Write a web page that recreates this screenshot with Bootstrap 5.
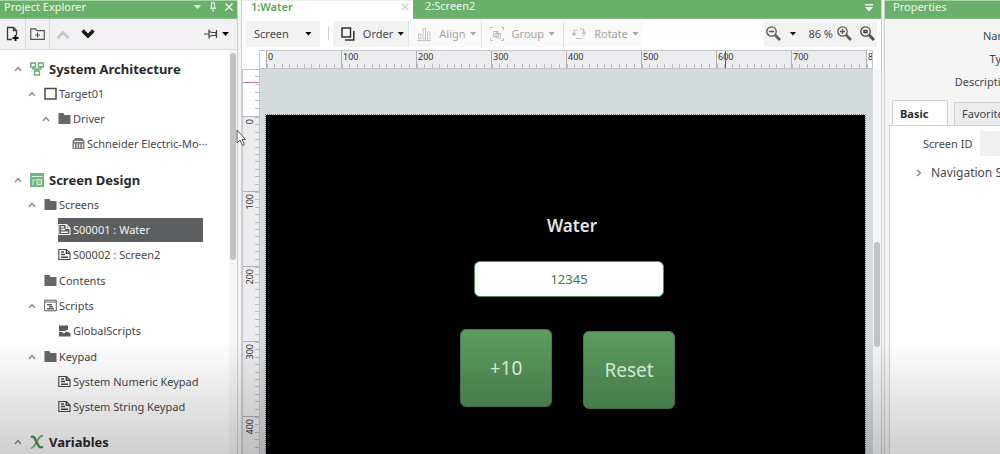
<!DOCTYPE html>
<html lang="en">
<head>
<meta charset="utf-8">
<meta name="viewport" content="width=device-width, initial-scale=1">
<title>Screen Editor</title>
<link href="https://cdn.jsdelivr.net/npm/bootstrap@5.3.0/dist/css/bootstrap.min.css" rel="stylesheet">
<style>
:root { --green: #69b16b; --ink: #47474a; --unit: 75px; }
body { font-family: "Noto Sans", "Open Sans", sans-serif; font-size: 11px; line-height: 16px; color: var(--ink); background: #fff; }
body::after { content: ""; position: fixed; inset: 75% 0 0 0; pointer-events: none; z-index: 9; background: linear-gradient(transparent, rgba(0,0,0,.19)); }
button { border: 0; background: none; padding: 0; color: inherit; line-height: 16px; }
svg { display: block; flex: none; }
ul { list-style: none; margin: 0; padding: 0; }

.bar { height: 19px; flex: none; background: var(--green); color: #effaec; border-top: 1px solid #a5d3a3; border-bottom: 1px solid #86bf86; padding-bottom: 5px; }
.tools { height: 31px; flex: none; }
main .tools { padding-bottom: 2px; }

.explorer { flex: 0 0 237px; }
.explorer .tools { background: #f3f1f3; border-bottom: 1px solid #dadada; }
.explorer .tools button { height: 30px; width: 25px; display: flex; align-items: center; justify-content: center; }
.explorer .tools .framed { border-left: 1px solid #dcdcdc; border-right: 1px solid #dcdcdc; }
.splitter { flex: 0 0 5px; background: #f4f4f5; border-left: 1px solid #cfcfd2; border-right: 1px solid #cfcfd2; }
.splitter.thin { flex-basis: 4px; }
.track { width: 8px; background: #f6f6f7; padding: 3px 1px; }
.track.for-desk { padding-top: 173px; }
.thumb { background: #c3c3c6; border-radius: 3px; height: 207px; }
.for-desk .thumb { height: 105px; }

.tree { padding: 6px 0 0 11px; }
.tree > li { margin-bottom: 8px; }
.tree ul { padding-left: 14px; padding-bottom: 1px; }
.tree h2 { font-size: 13px; font-weight: 700; margin: 0 0 0 5px; line-height: 18px; color: #2a2a2a; }
.node { height: 25px; display: flex; align-items: center; white-space: nowrap; }
.fold { width: 14px; margin-right: 5px; display: flex; justify-content: center; color: #858585; flex: none; }
.item { display: flex; align-items: center; gap: 2px; color: inherit; text-decoration: none; height: 24px; }
.item.chosen { background: #5c5e60; color: #f4f4f4; width: 145px; }

.tab-open { width: 171px; height: 19px; background: #fff; color: #56a559; font-weight: 600; padding: 0 4px 6px 9px; border-top: 1px solid #e6f2e6; }
.tab-back { line-height: 12px; }
.tool-group { background: #f3f2f3; height: 26px; }
.tool-group.off { background: #fafafa; color: #a3a3a3; }
.tool-group button { height: 26px; display: flex; align-items: center; gap: 8px; }
.tool-group .near { gap: 4px; }
.near svg { margin-right: 4px; }
.zooms { padding: 0 2px; }
.caret { width: 7px; height: 4px; background: currentColor; clip-path: polygon(0 0,100% 0,50% 100%); }

.ruler { background: #ececee; color: #333; font-size: 9px; line-height: 12px; overflow: hidden; }
.ruler-x { height: 19px; flex: none; margin: 0 8px 0 17px; border: 1px solid #c4c6c9; }
.ruler-x .step { flex: 0 0 var(--unit); padding-left: 1px; border-left: 1px solid #aeb0b3; background: repeating-linear-gradient(to right, #b9bbbe 0 1px, transparent 1px 10%) bottom / 100% 4px no-repeat; }
.ruler-x .step.beyond { background-color: #fff; }
.ruler-y { flex: 0 0 18px; border: 1px solid #c4c6c9; border-bottom: 0; }
.ruler-y .step { flex: 0 0 var(--unit); border-top: 1px solid #aeb0b3; padding-top: 2px; background: repeating-linear-gradient(to bottom, #b9bbbe 0 1px, transparent 1px 10%) right / 4px 100% no-repeat; }
.ruler-y .step span { writing-mode: vertical-rl; transform: rotate(180deg); display: block; width: 12px; margin-left: 1px; }
.lead-in { background: #fff; flex: 0 0 6px; }
.ruler-y .lead-in { flex: 0 0 46px; background: repeating-linear-gradient(to top, transparent 0 7px, #b9bbbe 7px 8px) right / 4px 100% no-repeat #fff; }
.mark-x { position: absolute; left: 465px; top: 0; bottom: 0; width: 1px; background: #e0202f; z-index: 1; }
.mark-y { position: absolute; top: 12px; left: 0; right: 0; height: 1px; background: #d0808a; }
.desk { background: #d5dadd; padding: 46px 8px 0 6px; }
.hmi { background: #000; outline: 1px dotted #777; color: #e3e6e5; }
.hmi > * { position: absolute; }
.hmi-title { left: 281px; top: 99px; font-size: 17px; line-height: 24px; font-weight: 600; }
.hmi-value { left: 208px; top: 146px; width: 190px; height: 36px; border: 1px solid #4f8f56; border-radius: 6px; background: #fff; color: #4a7458; text-align: center; font-size: 13px; }
.hmi-key { width: 92px; height: 78px; border: 1px solid #477c51; border-radius: 6px; background: linear-gradient(#5b9b5e, #518b56); color: #def3df; font-size: 19px; }
.key-add { left: 194px; top: 214px; }
.key-reset { left: 317px; top: 216px; }

.props { flex: 0 0 115px; background: #f5f5f6; }
.prop-names { width: 129px; padding-top: 6px; height: 81px; text-align: right; }
.prop-names div { height: 23px; padding-top: 3px; }
.prop-tabs { padding-left: 7px; gap: 6px; }
.prop-tabs button { height: 23px; width: 70px; border: 1px solid #d2d2d4; border-bottom: 0; background: #ececee; flex: none; text-align: left; padding-left: 7px; }
.prop-tabs .current { height: 26px; width: 56px; background: #fff; font-weight: 700; margin-bottom: -1px; color: #2c2c2c; }
.prop-page { background: #fff; border: 1px solid #d2d2d4; border-bottom: 0; margin-left: 4px; width: 140px; padding: 5px 0 0 33px; }
.prop-page input { width: 60px; height: 25px; border: 0; background: #f0f0f1; margin-left: 8px; }
.fold-row { margin-left: -7px; height: 33px; font-size: 12px; gap: 9px; }
.pointer { position: absolute; left: 236px; top: 129px; z-index: 5; }
</style>
</head>
<body>
<svg width="0" height="0" class="position-absolute" aria-hidden="true">
  <symbol id="up" viewBox="0 0 8 6"><path d="M1 5 4 1.500 7 5" fill="none" stroke="currentColor" stroke-width="1.300"/></symbol>
  <symbol id="folder" viewBox="0 0 13 13"><path d="M.5 1H5.500L6.500 3H12.500V12H.5Z" fill="#666"/></symbol>
  <symbol id="page" viewBox="0 0 13 13"><path d="M.8 1.500H8.500L12 5V11.500H.8Z" fill="none" stroke="currentColor" stroke-width="1.100"/><path d="M8.300 1.500V5.200H12M3 4H6M3 6.500H7M3 9.300H10" fill="none" stroke="currentColor" stroke-width="1.400"/></symbol>
</svg>

<div class="d-flex vh-100 overflow-hidden position-relative">
  <aside class="explorer d-flex flex-column">
    <header class="bar d-flex align-items-center ps-1 pe-1">
      <span class="me-auto">Project Explorer</span>
      <div class="d-flex align-items-center gap-2">
        <button aria-label="Menu"><span class="caret d-block"></span></button>
        <button aria-label="Pin"><svg width="8" height="10" viewBox="0 0 8 10" fill="none" stroke="#fff"><path d="M2.500 1V6M5.500 1V6M2 1H6M1 6.200H7M4 6V10"/></svg></button>
        <button aria-label="Close"><svg width="8" height="8" viewBox="0 0 8 8" stroke="#fff" stroke-width="1.200"><path d="M.5.5 7.500 7.500M7.500.5.500 7.500"/></svg></button>
      </div>
    </header>
    <div class="tools d-flex">
      <button aria-label="New screen"><svg width="13" height="16" viewBox="0 0 13 16" fill="none" stroke="#3b3b3b" stroke-width="1.300"><path d="M6 13.500H1.500V1.500H7.500L10.500 4.500V9M7.500 1.500V4.700H10.500"/><path d="M9.500 9V15M6.500 12H12.500" stroke="#111" stroke-width="2"/></svg></button>
      <button class="framed" aria-label="New folder"><svg width="15" height="12" viewBox="0 0 15 12" fill="none" stroke="#555" stroke-width="1.200"><path d="M.7 11.300V.8H5.500L7 2.700H14.300V11.300ZM7.500 4.500V9.500M5 7H10"/></svg></button>
      <button aria-label="Move up"><svg width="14" height="9" viewBox="0 0 14 9" fill="none" stroke="#c7c6c8" stroke-width="2.800"><path d="M1.500 8 7 2.500 12.500 8"/></svg></button>
      <button aria-label="Move down"><svg width="14" height="10" viewBox="0 0 14 10" fill="none" stroke="#161616" stroke-width="3.400"><path d="M1.500 1.500 7 7 12.500 1.500"/></svg></button>
      <button class="ms-auto me-2 gap-1" aria-label="Pin options"><svg width="14" height="10" viewBox="0 0 14 10" fill="none" stroke="#444" stroke-width="1.200"><path d="M0 5H5M5 .5V9.500M5 2.500 8 3.500H12V6.500H8L5 7.500M12.500 1V9"/></svg><span class="caret text-black"></span></button>
    </div>
    <div class="d-flex flex-grow-1 overflow-hidden">
      <ul class="tree flex-grow-1">
        <li>
          <div class="node"><button class="fold" aria-label="Collapse"><svg width="8" height="6"><use href="#up"/></svg></button>
            <svg width="14" height="14" viewBox="0 0 14 14" fill="none" stroke="#62ad79" stroke-width="1.400"><path d="M.8 1H5.500V5H.8ZM8.500 1H13.200V5H8.500ZM4.500 9H9.500V13H4.500ZM3 5V7H11V5M7 7V9"/></svg>
            <h2>System Architecture</h2></div>
          <ul><li>
            <div class="node"><button class="fold" aria-label="Collapse"><svg width="8" height="6"><use href="#up"/></svg></button><a class="item" href="#"><svg width="13" height="13" viewBox="0 0 13 13" fill="none" stroke="#4a4a4a" stroke-width="1.500"><path d="M1 1.500H12V12H1Z"/></svg>Target01</a></div>
            <ul><li>
              <div class="node"><button class="fold" aria-label="Collapse"><svg width="8" height="6"><use href="#up"/></svg></button><a class="item" href="#"><svg width="13" height="13"><use href="#folder"/></svg>Driver</a></div>
              <ul><li class="node"><span class="fold"></span><a class="item" href="#"><svg width="13" height="13" viewBox="0 0 13 13"><path d="M3 1H10L12.500 4V12H.5V4Z" fill="#7b7b7b"/><path d="M2 4.500H11M2.500 6.500V11M5.200 6.500V11M7.800 6.500V11M10.500 6.500V11" stroke="#f0f0f0" stroke-width="1.100"/></svg>Schneider Electric-Mo···</a></li></ul>
            </li></ul>
          </li></ul>
        </li>
        <li>
          <div class="node"><button class="fold" aria-label="Collapse"><svg width="8" height="6"><use href="#up"/></svg></button>
            <svg width="14" height="14" viewBox="0 0 14 14"><path d="M0 0H14V14H0Z" fill="#72b780"/><path d="M1.500 3.500H12.500M3 6V12M5 6V8" stroke="#d9efdc"/><path d="M7 6.500H11.500V11.500H7Z" fill="#8cc896" stroke="#d9efdc"/></svg>
            <h2>Screen Design</h2></div>
          <ul>
            <li>
              <div class="node"><button class="fold" aria-label="Collapse"><svg width="8" height="6"><use href="#up"/></svg></button><a class="item" href="#"><svg width="13" height="13"><use href="#folder"/></svg>Screens</a></div>
              <ul>
                <li class="node"><span class="fold"></span><a class="item chosen" href="#"><svg width="13" height="13"><use href="#page"/></svg>S00001 : Water</a></li>
                <li class="node"><span class="fold"></span><a class="item" href="#"><svg width="13" height="13"><use href="#page"/></svg>S00002 : Screen2</a></li>
              </ul>
            </li>
            <li class="node"><span class="fold"></span><a class="item" href="#"><svg width="13" height="13"><use href="#folder"/></svg>Contents</a></li>
            <li>
              <div class="node"><button class="fold" aria-label="Collapse"><svg width="8" height="6"><use href="#up"/></svg></button><a class="item" href="#"><svg width="13" height="13" viewBox="0 0 13 13" fill="none" stroke="#5f5f5f"><path d="M.7 1.200H12.300V11.800H.7ZM.7 3H12.300"/><path d="M3 5.800H8M5 7.800H9M3 9.800H10" stroke-width="1.500"/></svg>Scripts</a></div>
              <ul><li class="node"><span class="fold"></span><a class="item" href="#"><svg width="13" height="13" viewBox="0 0 13 13" fill="#5a5a5a"><path d="M1 1 3 2 4.500 1 6 2 8 1 10 2V5.500L7 7H1ZM1 8H4L6 9.500 8 7.500 12.500 9V12.500H1Z"/></svg>GlobalScripts</a></li></ul>
            </li>
            <li>
              <div class="node"><button class="fold" aria-label="Collapse"><svg width="8" height="6"><use href="#up"/></svg></button><a class="item" href="#"><svg width="13" height="13"><use href="#folder"/></svg>Keypad</a></div>
              <ul>
                <li class="node"><span class="fold"></span><a class="item" href="#"><svg width="13" height="13"><use href="#page"/></svg>System Numeric Keypad</a></li>
                <li class="node"><span class="fold"></span><a class="item" href="#"><svg width="13" height="13"><use href="#page"/></svg>System String Keypad</a></li>
              </ul>
            </li>
          </ul>
        </li>
        <li>
          <div class="node"><button class="fold" aria-label="Collapse"><svg width="8" height="6"><use href="#up"/></svg></button>
            <svg width="14" height="14" viewBox="0 0 14 14" fill="none"><path d="M13 1C10 .5 9 3 7 6.500S3 13.500 1 13" stroke="#74b779" stroke-width="1.800"/><path d="M1 2C4.500.5 5 4 6.500 7S9 13.500 13 12" stroke="#44924c" stroke-width="2.400"/></svg>
            <h2>Variables</h2></div>
        </li>
      </ul>
      <div class="track"><div class="thumb"></div></div>
    </div>
  </aside>
  <div class="splitter"></div>

  <main class="flex-grow-1 d-flex flex-column overflow-hidden">
    <nav class="bar d-flex align-items-start p-0 border-top-0">
      <button class="tab-open d-flex justify-content-between align-items-center">1:Water<svg width="8" height="8" viewBox="0 0 8 8" stroke="#c6cfc8" stroke-width="1.200"><path d="M.5.5 7.500 7.500M7.500.5.500 7.500"/></svg></button>
      <button class="tab-back ms-2 ps-1 flex-grow-1 text-start">2:Screen2</button>
      <button class="me-1 pe-1 mt-1" aria-label="Tab list"><svg width="8" height="8" viewBox="0 0 8 8" fill="#fff"><path d="M0 0H8V1.500H0ZM0 3H8L4 7.500Z"/></svg></button>
    </nav>
    <div class="tools d-flex align-items-center ps-1 pe-1">
      <div class="tool-group ps-2 pe-2"><button class="gap-3">Screen<span class="caret text-black"></span></button></div>
      <div class="vr ms-2 me-1 my-2 opacity-25"></div>
      <div class="tool-group ps-2 pe-1 border-end"><button class="near"><svg width="14" height="14" viewBox="0 0 14 14" fill="none" stroke="#333" stroke-width="1.500"><path d="M1 1H9.500V10H1ZM12.800 4V13H4"/></svg>Order<span class="caret text-black"></span></button></div>
      <div class="tool-group off ps-2 pe-1 border-end"><button class="near"><svg width="14" height="14" viewBox="0 0 14 14" fill="none" stroke="#c6c6c6"><path d="M1.500 7H4V12H1.500ZM6 1.500H8.500V12H6ZM10.500 5H13V12H10.500ZM0 13.500H14"/></svg>Align<span class="caret"></span></button></div>
      <div class="tool-group off ps-2 pe-2 border-end"><button class="near"><svg width="14" height="14" viewBox="0 0 14 14" fill="none" stroke="#bcbcbc"><path d="M0 3V.5H3M11 .5H13.500V3M13.500 11V13.500H11M3 13.500H.5V11M3.500 4.500H8V9.500H3.500ZM6 6.500H10.500V11H6ZM4 8 8 4M7 10 10 7"/></svg>Group<span class="caret"></span></button></div>
      <div class="tool-group off ps-2 pe-1"><button class="near"><svg width="14" height="12" viewBox="0 0 14 12" fill="none" stroke="#bcbcbc" stroke-width="1.200"><path d="M2 7V4Q2 2 4 2H6M0 5 2 7.500 4 5M8 1H10Q12 1 12 4V8M10 6 12 3.500 14 6M4 10.500H10"/></svg>Rotate<span class="caret"></span></button></div>
      <div class="tool-group zooms ms-auto d-flex align-items-center gap-2">
        <button aria-label="Zoom out"><svg width="15" height="15" viewBox="0 0 15 15" fill="none" stroke="#555" stroke-width="1.300"><circle cx="5.500" cy="5.500" r="4.700"/><path d="M3 5.500H8M9 10 10 9 14 13 13 14Z"/></svg></button>
        <button aria-label="Zoom levels"><span class="caret text-black"></span></button>
        <div class="d-flex align-items-center gap-1 ps-1"><span>86 %</span>
        <button aria-label="Zoom in"><svg width="15" height="15" viewBox="0 0 15 15" fill="none" stroke="#555" stroke-width="1.300"><circle cx="5.500" cy="5.500" r="4.700"/><path d="M3 5.500H8M5.500 3V8M9 10 10 9 14 13 13 14Z"/></svg></button></div>
        <button aria-label="Zoom to fit"><svg width="15" height="15" viewBox="0 0 15 15" fill="none" stroke="#444" stroke-width="1.300"><circle cx="5.500" cy="5.500" r="4.700"/><path d="M4 4.500H7V6.500H4ZM9 10 10 9 14 13 13 14Z"/></svg></button>
      </div>
    </div>
    <div class="ruler ruler-x d-flex position-relative">
      <div class="lead-in"></div><div class="mark-x"></div>
      <div class="step">0</div><div class="step">100</div><div class="step">200</div><div class="step">300</div><div class="step">400</div><div class="step">500</div><div class="step">600</div><div class="step">700</div><div class="step beyond">800</div>
    </div>
    <div class="d-flex flex-grow-1 overflow-hidden">
      <div class="ruler ruler-y d-flex flex-column position-relative">
        <div class="lead-in"></div><div class="mark-y"></div>
        <div class="step"><span>0</span></div><div class="step"><span>100</span></div><div class="step"><span>200</span></div><div class="step"><span>300</span></div><div class="step"><span>400</span></div>
      </div>
      <div class="desk flex-grow-1 d-flex">
        <div class="hmi flex-grow-1 position-relative">
          <label class="hmi-title" for="level">Water</label>
          <input class="hmi-value" id="level" value="12345">
          <button class="hmi-key key-add">+10</button>
          <button class="hmi-key key-reset">Reset</button>
        </div>
      </div>
      <div class="track for-desk"><div class="thumb"></div></div>
    </div>
  </main>
  <div class="splitter thin"></div>

  <aside class="props overflow-hidden d-flex flex-column">
    <header class="bar d-flex align-items-center ps-1"><span class="ps-1">Properties</span></header>
    <div class="prop-names"><div>Name</div><div>Type</div><div>Description</div></div>
    <div class="prop-tabs d-flex align-items-end"><button class="current">Basic</button><button>Favorite</button></div>
    <div class="prop-page flex-grow-1">
      <div class="d-flex align-items-center"><label class="text-nowrap" for="sid">Screen ID</label><input id="sid"></div>
      <button class="fold-row d-flex align-items-center text-nowrap"><svg width="6" height="8" viewBox="0 0 6 8" fill="none" stroke="#777" stroke-width="1.200"><path d="M1 1 4.500 4 1 7"/></svg>Navigation Settings</button>
    </div>
  </aside>
  <svg class="pointer" width="10" height="18" viewBox="0 0 10 18"><path d="M1 1V14L4 11 6.500 16.500 8.500 15.500 6 10.500H9.500Z" fill="#fff" stroke="#555"/></svg>
</div>
<script src="https://cdn.jsdelivr.net/npm/bootstrap@5.3.0/dist/js/bootstrap.bundle.min.js"></script>
</body>
</html>
